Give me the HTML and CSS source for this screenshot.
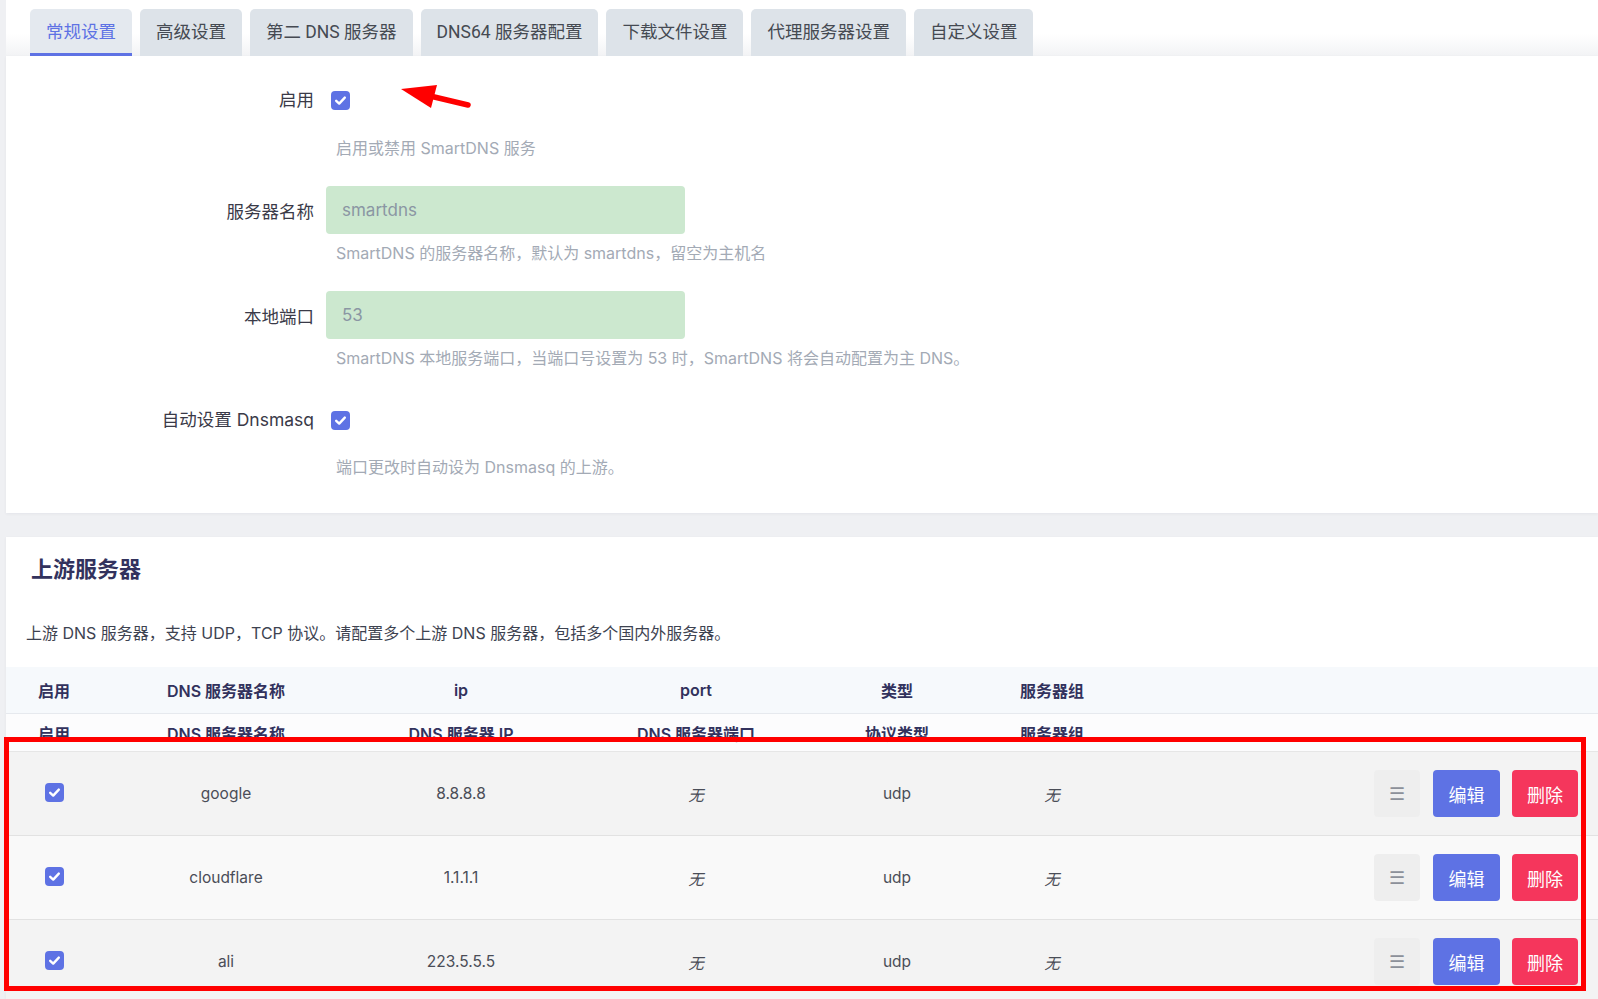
FILE: index.html
```html
<!DOCTYPE html>
<html lang="zh-CN">
<head>
<meta charset="utf-8">
<title>SmartDNS</title>
<link rel="stylesheet" href="styles.css">
</head>
<body>
<div class="page">
  <div class="tabs">
    <div class="tab active">常规设置</div>
    <div class="tab">高级设置</div>
    <div class="tab">第二 DNS 服务器</div>
    <div class="tab">DNS64 服务器配置</div>
    <div class="tab">下载文件设置</div>
    <div class="tab">代理服务器设置</div>
    <div class="tab">自定义设置</div>
  </div>

  <div class="card form-card">
    <div class="field check-field">
      <div class="label">启用</div>
      <div class="control"><span class="cbox"><svg width="19" height="19" viewBox="0 0 19 19"><rect width="19" height="19" rx="4" fill="#5e72e4"/><path d="M5.2 9.8 L8.2 12.6 L13.8 6.6" fill="none" stroke="#fff" stroke-width="2.4" stroke-linecap="round" stroke-linejoin="round"/></svg></span></div>
      <div class="hint">启用或禁用 SmartDNS 服务</div>
    </div>
    <div class="field input-field">
      <div class="label">服务器名称</div>
      <div class="control"><div class="input">smartdns</div></div>
      <div class="hint">SmartDNS 的服务器名称，默认为 smartdns，留空为主机名</div>
    </div>
    <div class="field input-field">
      <div class="label">本地端口</div>
      <div class="control"><div class="input">53</div></div>
      <div class="hint">SmartDNS 本地服务端口，当端口号设置为 53 时，SmartDNS 将会自动配置为主 DNS。</div>
    </div>
    <div class="field check-field last">
      <div class="label">自动设置 Dnsmasq</div>
      <div class="control"><span class="cbox"><svg width="19" height="19" viewBox="0 0 19 19"><rect width="19" height="19" rx="4" fill="#5e72e4"/><path d="M5.2 9.8 L8.2 12.6 L13.8 6.6" fill="none" stroke="#fff" stroke-width="2.4" stroke-linecap="round" stroke-linejoin="round"/></svg></span></div>
      <div class="hint">端口更改时自动设为 Dnsmasq 的上游。</div>
    </div>
  </div>

  <div class="card table-card">
    <h3 class="section-title">上游服务器</h3>
    <div class="section-desc">上游 DNS 服务器，支持 UDP，TCP 协议。请配置多个上游 DNS 服务器，包括多个国内外服务器。</div>
    <div class="table">
      <div class="row head">
        <div class="cell">启用</div>
        <div class="cell">DNS 服务器名称</div>
        <div class="cell">ip</div>
        <div class="cell">port</div>
        <div class="cell">类型</div>
        <div class="cell">服务器组</div>
        <div class="cell"></div>
      </div>
      <div class="row head2">
        <div class="cell">启用</div>
        <div class="cell">DNS 服务器名称</div>
        <div class="cell">DNS 服务器 IP</div>
        <div class="cell">DNS 服务器端口</div>
        <div class="cell">协议类型</div>
        <div class="cell">服务器组</div>
        <div class="cell"></div>
      </div>
      <div class="row data odd">
        <div class="cell"><span class="cbox"><svg width="19" height="19" viewBox="0 0 19 19"><rect width="19" height="19" rx="4" fill="#5e72e4"/><path d="M5.2 9.8 L8.2 12.6 L13.8 6.6" fill="none" stroke="#fff" stroke-width="2.4" stroke-linecap="round" stroke-linejoin="round"/></svg></span></div>
        <div class="cell">google</div>
        <div class="cell">8.8.8.8</div>
        <div class="cell none">无</div>
        <div class="cell">udp</div>
        <div class="cell none">无</div>
        <div class="cell actions"><span class="btn menu">☰</span><span class="btn edit">编辑</span><span class="btn del">删除</span></div>
      </div>
      <div class="row data even">
        <div class="cell"><span class="cbox"><svg width="19" height="19" viewBox="0 0 19 19"><rect width="19" height="19" rx="4" fill="#5e72e4"/><path d="M5.2 9.8 L8.2 12.6 L13.8 6.6" fill="none" stroke="#fff" stroke-width="2.4" stroke-linecap="round" stroke-linejoin="round"/></svg></span></div>
        <div class="cell">cloudflare</div>
        <div class="cell">1.1.1.1</div>
        <div class="cell none">无</div>
        <div class="cell">udp</div>
        <div class="cell none">无</div>
        <div class="cell actions"><span class="btn menu">☰</span><span class="btn edit">编辑</span><span class="btn del">删除</span></div>
      </div>
      <div class="row data odd">
        <div class="cell"><span class="cbox"><svg width="19" height="19" viewBox="0 0 19 19"><rect width="19" height="19" rx="4" fill="#5e72e4"/><path d="M5.2 9.8 L8.2 12.6 L13.8 6.6" fill="none" stroke="#fff" stroke-width="2.4" stroke-linecap="round" stroke-linejoin="round"/></svg></span></div>
        <div class="cell">ali</div>
        <div class="cell">223.5.5.5</div>
        <div class="cell none">无</div>
        <div class="cell">udp</div>
        <div class="cell none">无</div>
        <div class="cell actions"><span class="btn menu">☰</span><span class="btn edit">编辑</span><span class="btn del">删除</span></div>
      </div>
      <div class="highlight-box"></div>
    </div>
  </div>

  <svg class="arrow" width="1598" height="200" viewBox="0 0 1598 200">
    <line x1="468" y1="105" x2="428" y2="95.5" stroke="#ff0000" stroke-width="5.5" stroke-linecap="round"/>
    <polygon points="401,89 437,85 431,108" fill="#ff0000"/>
  </svg>
</div>
</body>
</html>
```

FILE: styles.css
```css
html, body {
  margin: 0;
  padding: 0;
}
body {
  background: #eff0f3;
  font-family: Inter, "Noto Sans CJK SC", sans-serif;
  color: #3a3a48;
  overflow: hidden;
}
.page {
  position: relative;
  padding-left: 6px;
}
.tabs {
  display: flex;
  gap: 8px;
  padding: 9px 0 0 24px;
  height: 47px;
  background: linear-gradient(to bottom, #ffffff 0, #ffffff 34px, #f2f3f5 56px);
}
.tab {
  height: 47px;
  box-sizing: border-box;
  padding: 0 16px 4px;
  display: flex;
  align-items: center;
  background: #dde3e9;
  border-radius: 5px 5px 0 0;
  font-family: Roboto, "Noto Sans CJK SC", sans-serif;
  font-size: 17.5px;
  color: #454a52;
  white-space: nowrap;
}
.tab.active {
  background: #e4e9ef;
  color: #5e72e4;
  border-bottom: 3px solid #5e72e4;
  padding-bottom: 1px;
}
.card {
  background: #fff;
  box-shadow: 0 1px 3px rgba(50, 50, 93, 0.06);
}
.form-card {
  padding: 20px 0 35px;
}
.field {
  display: grid;
  grid-template-columns: 308px 1fr;
  column-gap: 12px;
  margin-bottom: 27px;
}
.field.last {
  margin-bottom: 0;
}
.label {
  grid-column: 1;
  grid-row: 1;
  text-align: right;
  align-self: center;
  font-size: 17.5px;
  color: #3a3a48;
  white-space: nowrap;
}
.check-field .label {
  padding-bottom: 3px;
}
.control {
  grid-column: 2;
  grid-row: 1;
  height: 48px;
  display: flex;
  align-items: center;
}
.check-field .control {
  padding-left: 5px;
}
.cbox {
  display: inline-flex;
  width: 19px;
  height: 19px;
}
.input {
  width: 359px;
  height: 48px;
  box-sizing: border-box;
  background: #cce8cf;
  border-radius: 4px;
  padding: 0 16px;
  display: flex;
  align-items: center;
  font-size: 17px;
  color: #8a96a3;
}
.hint {
  grid-column: 2;
  grid-row: 2;
  padding-left: 10px;
  font-size: 16px;
  line-height: 22px;
  color: #a3aab5;
  white-space: nowrap;
}
.check-field .hint {
  margin-top: 13px;
}
.check-field.last .hint {
  margin-top: 12px;
}
.input-field .hint {
  margin-top: 8px;
}
.table-card {
  margin-top: 24px;
  padding-top: 17px;
}
.section-title {
  margin: 0;
  padding-left: 25px;
  font-size: 22px;
  line-height: 30px;
  font-weight: 700;
  color: #32325d;
}
.section-desc {
  margin-top: 38px;
  padding-left: 20px;
  font-size: 16px;
  line-height: 22px;
  color: #3d4250;
}
.table {
  position: relative;
  margin-top: 23px;
}
.row {
  display: grid;
  grid-template-columns: 96px 248px 222px 248px 154px 156px 1fr;
  align-items: center;
}
.cell {
  text-align: center;
  white-space: nowrap;
}
.row.head {
  height: 47px;
  background: #f6f9fc;
  border-bottom: 1px solid #e6e9ee;
  box-sizing: border-box;
  font-size: 16px;
  font-weight: 600;
  color: #32325d;
}
.row.head2 {
  height: 38px;
  background: #fcfcfd;
  border-bottom: 1px solid #e6e6e6;
  box-sizing: border-box;
  font-size: 16px;
  font-weight: 600;
  color: #32325d;
}
.row.data {
  height: 84px;
  box-sizing: border-box;
  border-bottom: 1px solid #e2e2e2;
  font-size: 15.5px;
  color: #4a4d57;
}
.row.data.odd {
  background: #f3f3f3;
}
.row.data.even {
  background: #f9f9f9;
}
.row.data .cell:first-child {
  display: flex;
  justify-content: center;
  padding-bottom: 3px;
}
.cell.none {
  font-style: italic;
}
.cell.actions {
  display: flex;
  justify-content: flex-end;
  gap: 12px;
  padding-right: 20px;
}
.btn {
  height: 47px;
  border-radius: 4px;
  display: inline-flex;
  align-items: center;
  justify-content: center;
  font-size: 18px;
  color: #fff;
  box-sizing: border-box;
}
.btn.menu {
  width: 46px;
  background: #eeeeee;
  color: #8c9099;
  font-size: 18px;
  margin-right: 1px;
}
.btn.edit {
  width: 67px;
  background: #5e72e4;
}
.btn.del {
  width: 66px;
  background: #f5365c;
}
.highlight-box {
  position: absolute;
  left: -2px;
  top: 70px;
  width: 1582px;
  height: 254px;
  box-sizing: border-box;
  border: 5px solid #ff0000;
  pointer-events: none;
}
.arrow {
  position: absolute;
  left: 0;
  top: 0;
  pointer-events: none;
}
```
